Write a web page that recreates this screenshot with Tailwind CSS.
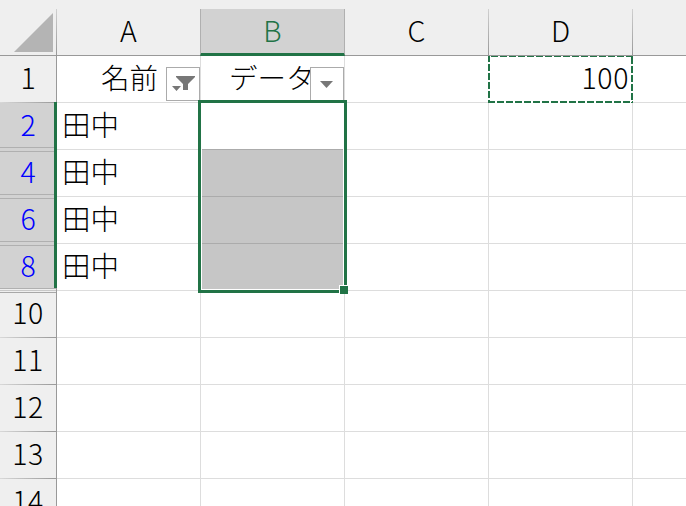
<!DOCTYPE html>
<html lang="ja">
<head>
<meta charset="utf-8">
<title>Sheet</title>
<script src="https://cdn.jsdelivr.net/npm/@tailwindcss/browser@4"></script>
</head>
<body class="w-[686px] h-[506px] overflow-hidden bg-white">
<div class="relative w-[686px] h-[506px] overflow-hidden font-['Noto_Sans_CJK_JP',sans-serif] font-light text-[28.5px] leading-[42px] text-black">
  <!-- column headers -->
  <div class="flex h-[56px] bg-[#efefef] border-b border-[#999999] pt-[9px]">
    <div class="w-[56px] shrink-0 flex justify-end pt-[4px] pr-[3px]">
      <svg class="w-[39px] h-[39px]" viewBox="0 0 39 39"><path d="M39 0V39H0Z" fill="#b4b4b4"/></svg>
    </div>
    <div class="w-px shrink-0 bg-linear-to-b from-[#d0d0d0] to-[#999999]"></div>
    <div class="w-[143px] shrink-0 text-center">A</div>
    <div class="w-[145px] h-[47px] shrink-0 text-center bg-[#d2d2d2] border-x border-x-[#b0b0b0] border-b-3 border-b-[#217346] text-[#217346]">B</div>
    <div class="w-[143px] shrink-0 text-center">C</div>
    <div class="w-px shrink-0 bg-linear-to-b from-[#d0d0d0] to-[#999999]"></div>
    <div class="w-[143px] shrink-0 text-center">D</div>
    <div class="w-px shrink-0 bg-linear-to-b from-[#d0d0d0] to-[#999999]"></div>
  </div>
  <div class="flex">
    <!-- row headers -->
    <div class="w-[57px] h-[450px] shrink-0 overflow-hidden bg-[#efefef] border-r border-[#999999] text-center">
      <div class="h-[46px]">1</div>
      <div class="h-px bg-linear-to-r from-[#d8d8d8] to-[#999999]"></div>
      <div class="h-[188px] bg-[#d2d2d2] text-[#0000ff]">
        <div class="h-[44px]">2</div>
        <div class="h-[5px] border-y border-[#b0b0b0]"></div>
        <div class="h-[42px] leading-[38px]">4</div>
        <div class="h-[5px] border-y border-[#b0b0b0]"></div>
        <div class="h-[42px] leading-[38px]">6</div>
        <div class="h-[5px] border-y border-[#b0b0b0]"></div>
        <div class="h-[42px] leading-[38px]">8</div>
        <div class="h-px bg-[#b0b0b0]"></div>
        <div class="h-[2px] bg-[#efefef] border-b border-[#c8c8c8]"></div>
      </div>
      <div class="h-[2px] border-b border-[#a8a8a8]"></div>
      <div class="h-[44px] leading-[38px] tracking-[0.4px]">10</div>
      <div class="h-px bg-linear-to-r from-[#d8d8d8] to-[#999999]"></div>
      <div class="h-[46px] tracking-[0.4px]">11</div>
      <div class="h-px bg-linear-to-r from-[#d8d8d8] to-[#999999]"></div>
      <div class="h-[46px] tracking-[0.4px]">12</div>
      <div class="h-px bg-linear-to-r from-[#d8d8d8] to-[#999999]"></div>
      <div class="h-[46px] tracking-[0.4px]">13</div>
      <div class="h-px bg-linear-to-r from-[#d8d8d8] to-[#999999]"></div>
      <div class="h-[46px] tracking-[0.4px]">14</div>
    </div>
    <!-- cells -->
    <div class="grid grid-cols-[144px_144px_144px_144px_54px] auto-rows-[47px] h-[450px] overflow-hidden [&>div]:border-b [&>div]:border-r [&>div]:border-[#dddddd] whitespace-nowrap">
      <div class="text-right pr-[42px]">名前</div><div class="pl-[28px]">データ</div><div></div><div class="text-right pr-[3px] tracking-[0.6px]">100</div><div></div>
      <div class="pl-[5px]">田中</div><div></div><div></div><div></div><div></div>
      <div class="pl-[5px]">田中</div><div></div><div></div><div></div><div></div>
      <div class="pl-[5px]">田中</div><div></div><div></div><div></div><div></div>
      <div class="pl-[5px]">田中</div><div></div><div></div><div></div><div></div>
      <div></div><div></div><div></div><div></div><div></div>
      <div></div><div></div><div></div><div></div><div></div>
      <div></div><div></div><div></div><div></div><div></div>
      <div></div><div></div><div></div><div></div><div></div>
      <div></div><div></div><div></div><div></div><div></div>
    </div>
  </div>

  <!-- filter buttons -->
  <svg class="absolute left-[166px] top-[67px] w-[34px] h-[34px]" viewBox="0 0 34 34"><rect x=".5" y=".5" width="33" height="33" fill="#fff" stroke="#ababab"/><path d="M10 9H29V10L22 17V23H17V17L10 10ZM6 19H15L10.5 24Z" fill="#777"/></svg>
  <svg class="absolute left-[310px] top-[67px] w-[34px] h-[34px]" viewBox="0 0 34 34"><rect x=".5" y=".5" width="33" height="33" fill="#fff" stroke="#ababab"/><path d="M10 14H23L16.5 21Z" fill="#777"/></svg>

  <!-- selection marker beside the row numbers -->
  <div class="absolute left-[54px] top-[102px] w-[3px] h-[186px] bg-[#217346]"></div>

  <!-- selected range -->
  <div class="absolute left-[198px] top-[100px] w-[149px] h-[193px] border-3 border-[#217346] bg-white px-px pb-px pt-[46px]">
    <div class="h-full bg-[#c6c6c6] border-t border-[#ababab]">
      <div class="h-[47px] border-b border-[#ababab]"></div>
      <div class="h-[47px] border-b border-[#ababab]"></div>
    </div>
  </div>
  <div class="absolute left-[339px] top-[285px] w-[9px] h-[9px] bg-[#217346] border-l border-t border-white"></div>

  <!-- copied cell -->
  <svg class="absolute left-[488px] top-[56px] w-[145px] h-[47px]" viewBox="0 0 145 47" fill="none" stroke="#217346">
    <path d="M0 46H145M1 0V47M144 0V47" stroke="#fff" stroke-width="2"/>
    <path d="M0 .5H145" stroke-width="1" stroke-dasharray="7 2" stroke-dashoffset="6"/>
    <path d="M0 46H145" stroke-width="2" stroke-dasharray="7 2"/>
    <path d="M1 0V47" stroke-width="2" stroke-dasharray="7 2" stroke-dashoffset="1"/>
    <path d="M144 0V47" stroke-width="2" stroke-dasharray="7 2" stroke-dashoffset="8"/>
  </svg>
</div>
</body>
</html>
